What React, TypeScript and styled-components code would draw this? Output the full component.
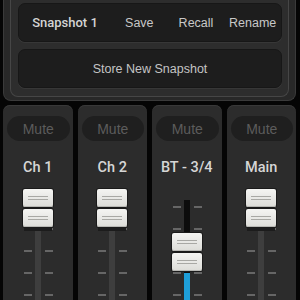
import styled, { createGlobalStyle } from "styled-components";

const GlobalStyle = createGlobalStyle`
  html, body {
    margin: 0;
    padding: 0;
    background: #050505;
  }
  body {
    font-family: "Liberation Sans", Arial, sans-serif;
  }
`;

const Screen = styled.div`
  width: 300px;
  height: 300px;
  overflow: hidden;
  background: #050505;
  display: flex;
  flex-direction: column;
`;

const SnapshotArea = styled.div`
  margin: 0 4px 0 3px;
  background: #282828;
  border: 1px solid #3a3a3a;
  border-top: none;
  border-radius: 0 0 8px 8px;
  padding: 0 6px 3px 6px;
`;

const SnapshotPanel = styled.div`
  background: #2d2d2d;
  border: 1px solid #464646;
  border-top: none;
  border-radius: 0 0 8px 8px;
  padding: 3px 6px 8px 7px;
  display: flex;
  flex-direction: column;
  gap: 7px;
`;

const DarkBox = styled.div`
  height: 39px;
  box-sizing: border-box;
  background: #1d1d1d;
  border: 1px solid #171717;
  border-radius: 7px;
  box-shadow: 0 1px 0 rgba(255, 255, 255, 0.05);
  color: #cfcfcf;
  font-size: 12.5px;
`;

const SnapshotRow = styled(DarkBox)`
  display: grid;
  grid-template-columns: 92px repeat(3, 1fr);
  align-items: center;
  justify-items: center;
`;

const SnapshotName = styled.span<{ $strong?: boolean }>`
  font-family: ${(p) => (p.$strong ? "Roboto, sans-serif" : "inherit")};
  font-weight: ${(p) => (p.$strong ? 500 : 400)};
  color: ${(p) => (p.$strong ? "#d4d4d4" : "#c8c8c8")};
  font-size: ${(p) => (p.$strong ? "13px" : "12.5px")};
`;

const StoreButton = styled(DarkBox)`
  display: flex;
  align-items: center;
  justify-content: center;
  color: #c4c4c4;
`;

const Strips = styled.div`
  margin-top: 4px;
  padding: 0 4px 0 3px;
  display: grid;
  grid-template-columns: repeat(4, 1fr);
  gap: 5px;
  flex: 1;
`;

const Strip = styled.div`
  background: #2c2c2c;
  border-radius: 7px 7px 0 0;
  box-shadow: inset 0 1px 0 #383838;
  display: flex;
  flex-direction: column;
  align-items: center;
  padding-top: 11px;
  height: 210px;
`;

const MuteButton = styled.div`
  align-self: stretch;
  margin: 0 3px 0 4px;
  height: 25px;
  border-radius: 13px;
  background: #1f1f1f;
  color: #5c5c5c;
  font-size: 14px;
  display: flex;
  align-items: center;
  justify-content: center;
`;

const ChannelName = styled.div`
  margin-top: 19px;
  height: 16px;
  line-height: 16px;
  font-family: Roboto, sans-serif;
  font-size: 14.5px;
  font-weight: 500;
  color: #d6d6d6;
  white-space: nowrap;
`;

const Fader = styled.div`
  position: relative;
  margin-top: 9px;
  width: 40px;
  height: 130px;
`;

const Track = styled.div`
  position: absolute;
  left: 17px;
  top: 15px;
  bottom: 0;
  width: 6px;
  background: #0c0c0c;
`;

const TrackFill = styled.div<{ $fill: string }>`
  position: absolute;
  left: 0;
  right: 0;
  bottom: 0;
  background: ${(p) => p.$fill};
`;

const Tick = styled.div<{ $side: "left" | "right" }>`
  position: absolute;
  ${(p) => (p.$side === "left" ? "left: 6px;" : "left: 27px;")}
  width: 8px;
  height: 2px;
  background: #666666;
`;

const Knob = styled.div`
  position: absolute;
  left: 5px;
  width: 30px;
  display: flex;
  flex-direction: column;
  gap: 2px;
  z-index: 1;
`;

const KnobCap = styled.div`
  position: relative;
  height: 18px;
  border-radius: 2px;
  background: linear-gradient(#f4f4f2, #dcdcd8);
  box-shadow: inset 0 -1px 0 #b8b8b4, 0 0 0 1px #1a1a1a;
  display: flex;
  flex-direction: column;
  align-items: center;
  justify-content: center;
  gap: 2px;
`;

const Groove = styled.div`
  width: 20px;
  height: 1px;
  background: #a8a8a4;
`;

const KnobBase = styled.div`
  margin: -2px 1px 0;
  height: 4px;
  background: #1c1c1c;
`;

const TICKS = [21, 43, 65, 87, 109];

type Channel = {
  name: string;
  knobTop: number;
  fill: string;
  base: boolean;
};

const channels: Channel[] = [
  { name: "Ch 1", knobTop: 4, fill: "#3e3e3e", base: true },
  { name: "Ch 2", knobTop: 4, fill: "#3e3e3e", base: true },
  { name: "BT - 3/4", knobTop: 48, fill: "#1e9fd9", base: false },
  { name: "Main", knobTop: 4, fill: "#3e3e3e", base: true },
];

function ChannelStrip({ name, knobTop, fill, base }: Channel) {
  const fillHeight = 130 - (knobTop + 40);
  return (
    <Strip>
      <MuteButton>Mute</MuteButton>
      <ChannelName>{name}</ChannelName>
      <Fader>
        <Track>
          <TrackFill $fill={fill} style={{ height: fillHeight }} />
        </Track>
        {TICKS.map((t) => (
          <div key={t}>
            <Tick $side="left" style={{ top: t }} />
            <Tick $side="right" style={{ top: t }} />
          </div>
        ))}
        <Knob style={{ top: knobTop }}>
          <KnobCap>
            <Groove />
            <Groove />
          </KnobCap>
          <KnobCap>
            <Groove />
            <Groove />
          </KnobCap>
          {base && <KnobBase />}
        </Knob>
      </Fader>
    </Strip>
  );
}

export default function App() {
  return (
    <>
      <GlobalStyle />
      <Screen>
        <SnapshotArea>
          <SnapshotPanel>
            <SnapshotRow>
              <SnapshotName $strong>Snapshot 1</SnapshotName>
              <SnapshotName>Save</SnapshotName>
              <SnapshotName>Recall</SnapshotName>
              <SnapshotName>Rename</SnapshotName>
            </SnapshotRow>
            <StoreButton>Store New Snapshot</StoreButton>
          </SnapshotPanel>
        </SnapshotArea>
        <Strips>
          {channels.map((c) => (
            <ChannelStrip key={c.name} {...c} />
          ))}
        </Strips>
      </Screen>
    </>
  );
}
